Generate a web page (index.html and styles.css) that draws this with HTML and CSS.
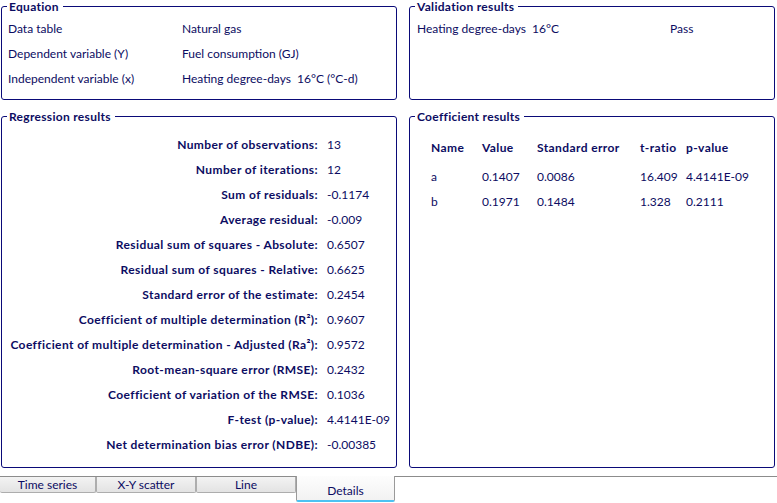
FILE: index.html
```
<!DOCTYPE html>
<html>
<head>
	<title>Regression details</title>
	<link rel="stylesheet" href="styles.css">
</head>
<body>
	<div class="panels">
		<fieldset class="box">
			<legend>Equation</legend>
			<div class="pairs">
				<span>Data table</span><span>Natural gas</span>
				<span>Dependent variable (Y)</span><span>Fuel consumption (GJ)</span>
				<span>Independent variable (x)</span><span>Heating degree-days&nbsp; 16°C (°C-d)</span>
			</div>
		</fieldset>

		<fieldset class="box">
			<legend>Validation results</legend>
			<div class="validation">
				<span>Heating degree-days&nbsp; 16°C</span><span>Pass</span>
			</div>
		</fieldset>

		<fieldset class="box">
			<legend>Regression results</legend>
			<div class="stats">
				<b>Number of observations:</b><span>13</span>
				<b>Number of iterations:</b><span>12</span>
				<b>Sum of residuals:</b><span>-0.1174</span>
				<b>Average residual:</b><span>-0.009</span>
				<b>Residual sum of squares - Absolute:</b><span>0.6507</span>
				<b>Residual sum of squares - Relative:</b><span>0.6625</span>
				<b>Standard error of the estimate:</b><span>0.2454</span>
				<b>Coefficient of multiple determination (R²):</b><span>0.9607</span>
				<b>Coefficient of multiple determination - Adjusted (Ra²):</b><span>0.9572</span>
				<b>Root-mean-square error (RMSE):</b><span>0.2432</span>
				<b>Coefficient of variation of the RMSE:</b><span>0.1036</span>
				<b>F-test (p-value):</b><span>4.4141E-09</span>
				<b>Net determination bias error (NDBE):</b><span>-0.00385</span>
			</div>
		</fieldset>

		<fieldset class="box">
			<legend>Coefficient results</legend>
			<table class="coef">
				<thead>
					<tr>
						<th class="c-name">Name</th>
						<th class="c-value">Value</th>
						<th class="c-err">Standard error</th>
						<th class="c-t">t-ratio</th>
						<th>p-value</th>
					</tr>
				</thead>
				<tbody>
					<tr><td>a</td><td>0.1407</td><td>0.0086</td><td>16.409</td><td>4.4141E-09</td></tr>
					<tr><td>b</td><td>0.1971</td><td>0.1484</td><td>1.328</td><td>0.2111</td></tr>
				</tbody>
			</table>
		</fieldset>
	</div>

	<div class="tabbar">
		<div class="tab">Time series</div>
		<div class="tab">X-Y scatter</div>
		<div class="tab">Line</div>
		<div class="tab active">Details</div>
	</div>
</body>
</html>
```

FILE: styles.css
```
body {
	margin: 0;
	font-family: Lato, sans-serif;
	font-size: 12px;
	color: #0c0c62;
	background: #fff;
}
b, th {
	letter-spacing: 0.4px;
}
.panels {
	display: grid;
	grid-template-columns: 396px 366px;
	grid-template-rows: 99px 357px;
	column-gap: 12px;
	row-gap: 11px;
	padding: 1px 0 0 1px;
}
.box {
	margin: 0;
	padding: 0 6px;
	border: 1px solid #0a0a78;
	border-radius: 3px;
	min-width: 0;
}
.box legend {
	font-weight: bold;
	letter-spacing: 0.3px;
	line-height: 11px;
	padding: 0 4px 0 2px;
	margin-left: -1px;
}
.pairs {
	display: grid;
	grid-template-columns: 174px auto;
	grid-auto-rows: 25px;
	align-items: center;
	padding-top: 4px;
}
.validation {
	display: grid;
	grid-template-columns: 253px auto;
	grid-auto-rows: 25px;
	align-items: center;
	padding: 4px 0 0 1px;
}
.stats {
	display: grid;
	grid-template-columns: 310px auto;
	column-gap: 9px;
	grid-auto-rows: 25px;
	align-items: center;
	padding-top: 10px;
}
.stats b {
	text-align: right;
	white-space: nowrap;
}
.coef {
	border-collapse: collapse;
	margin: 13px 0 0 15px;
}
.coef th, .coef td {
	padding: 0;
	text-align: left;
	vertical-align: middle;
	white-space: nowrap;
}
.coef th {
	height: 24px;
}
.coef td {
	height: 25px;
}
.coef tbody tr:first-child td {
	height: 25px;
	padding-top: 5px;
}
.coef .c-name { width: 51px; }
.coef .c-value { width: 55px; }
.coef .c-err { width: 103px; }
.coef .c-t { width: 46px; }
.tabbar {
	display: flex;
	margin-top: 8px;
	border-top: 1px solid #8c8c8c;
	height: 26px;
}
.tab {
	box-sizing: border-box;
	width: 100px;
	height: 16px;
	line-height: 15px;
	text-align: center;
	background: linear-gradient(#f3f3f3, #e3e3e3);
	border: 1px solid #adadad;
	border-top: 0;
	border-radius: 0 0 2px 2px;
}
.tab:first-child {
	width: 96px;
	border-left: 0;
}
.tab.active {
	width: 99px;
	height: 26px;
	margin-top: -1px;
	padding-top: 6px;
	line-height: 18px;
	background: linear-gradient(#fdfdfd, #f2f2f2);
	border: 1px solid #9a9a9a;
	border-top: 0;
	border-bottom: 2px solid #4cc2f2;
}
```
